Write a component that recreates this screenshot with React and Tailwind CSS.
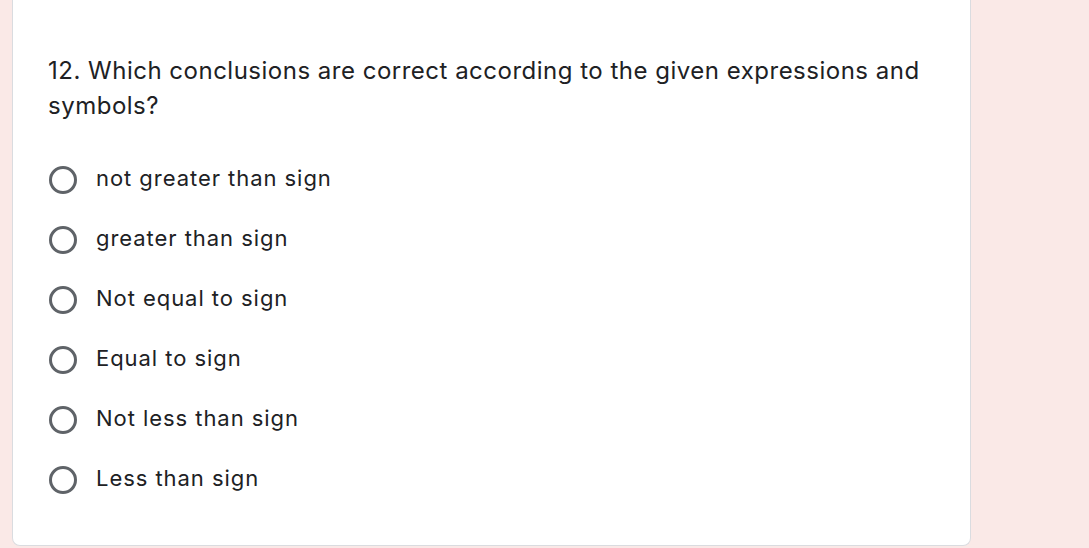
import React from "react";

const options = [
  "not greater than sign",
  "greater than sign",
  "Not equal to sign",
  "Equal to sign",
  "Not less than sign",
  "Less than sign",
];

export default function App() {
  return (
    <div
      className="w-[1089px] h-[548px] bg-[#fae9e7] overflow-hidden"
      style={{ fontFamily: "Inter, 'Open Sans', sans-serif" }}
    >
      <div className="ml-[12px] w-[959px] h-[546px] bg-white border border-t-0 border-[#dadce0] rounded-b-[8px] pt-[53px] px-[35px]">
        <div className="text-[24px] leading-[35px] tracking-[0.5px] text-[#202124] w-[880px]">
          12. Which conclusions are correct according to the given expressions and symbols?
        </div>
        <div className="mt-[27px] flex flex-col">
          {options.map((o) => (
            <div key={o} className="h-[60px] flex items-center">
              <div className="w-[30px] h-[30px] flex items-center justify-center">
                <div className="w-[28px] h-[28px] rounded-full border-[3px] border-[#5f6368]" />
              </div>
              <span className="ml-[18px] mb-[3px] text-[22px] tracking-[0.95px] text-[#202124]">{o}</span>
            </div>
          ))}
        </div>
      </div>
    </div>
  );
}
